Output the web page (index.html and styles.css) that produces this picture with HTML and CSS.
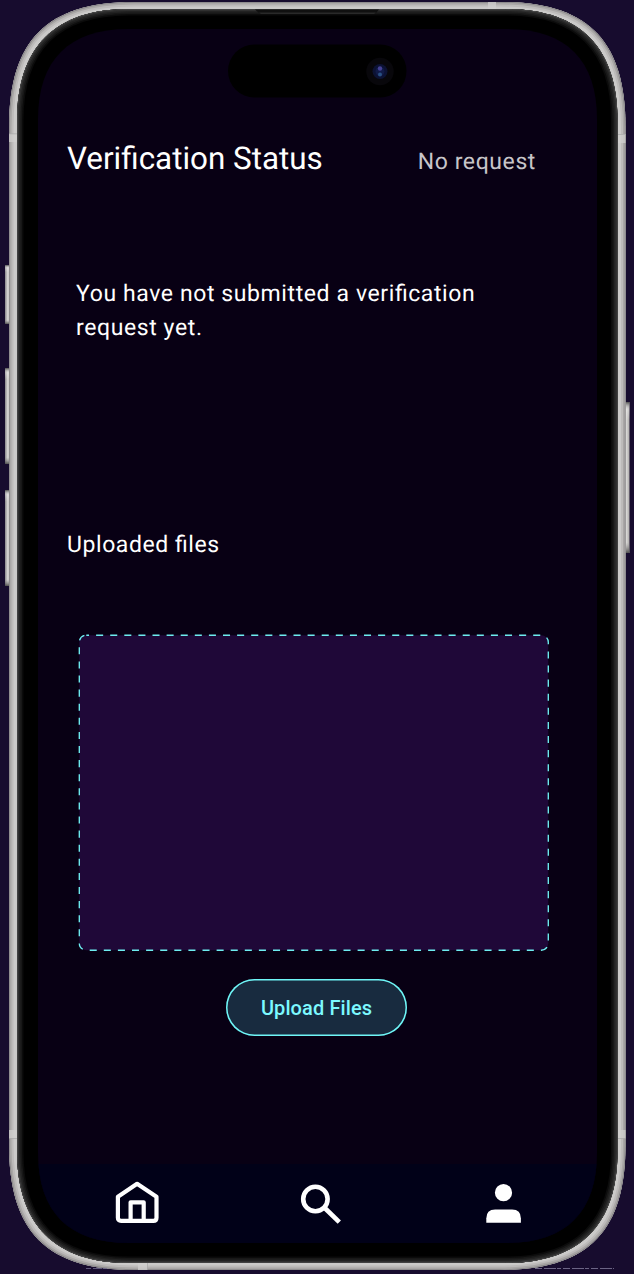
FILE: index.html
```html
<!DOCTYPE html>
<html lang="en">
<head>
<meta charset="utf-8">
<title>Verification Status</title>
<link rel="stylesheet" href="styles.css">
</head>
<body>
<div class="device">
  <svg class="frame" viewBox="0 0 634 1274" aria-hidden="true">
    <defs>
      <linearGradient id="key" x1="0" x2="1" y1="0" y2="0">
        <stop offset="0" stop-color="#88868a"/><stop offset=".45" stop-color="#d8d7d5"/><stop offset="1" stop-color="#aaa8a6"/>
      </linearGradient>
      <linearGradient id="keyEnds" x1="0" x2="0" y1="0" y2="1">
        <stop offset="0" stop-color="#444" stop-opacity=".9"/><stop offset=".05" stop-color="#fff" stop-opacity=".3"/><stop offset=".12" stop-color="#fff" stop-opacity="0"/>
        <stop offset=".93" stop-color="#888" stop-opacity="0"/><stop offset="1" stop-color="#444" stop-opacity=".9"/>
      </linearGradient>
      <path id="outer" d="M9 127C9 40 47 2 134 2H500.500C587.500 2 625.500 40 625.500 127V1145C625.500 1232 587.500 1270 500.500 1270H134C47 1270 9 1232 9 1145Z"/>
      <path id="inner" d="M17 121C17 47 55 9 129 9H505.500C579.500 9 617.500 47 617.500 121V1151C617.500 1225 579.500 1263 505.500 1263H129C55 1263 17 1225 17 1151Z"/>
      <clipPath id="outerClip"><use href="#outer"/></clipPath>
      <clipPath id="innerClip"><use href="#inner"/></clipPath>
      <clipPath id="screenClip"><path d="M38 119C38 60 69 29 128 29H507C566 29 597 60 597 119V1153C597 1212 566 1243 507 1243H128C69 1243 38 1212 38 1153Z"/></clipPath>
    </defs>
    <g fill="url(#key)">
      <rect x="5" y="265" width="6" height="59"/><rect x="5" y="368" width="6" height="96"/><rect x="5" y="490" width="6" height="96"/><rect x="624" y="402" width="5.500" height="151"/>
    </g>
    <g fill="url(#keyEnds)">
      <rect x="5" y="265" width="6" height="59"/><rect x="5" y="368" width="6" height="96"/><rect x="5" y="490" width="6" height="96"/><rect x="624" y="402" width="5.500" height="151"/>
    </g>
    <g clip-path="url(#outerClip)" fill="none">
      <use href="#outer" fill="#cbcac9"/>
      <use href="#outer" stroke="#bdbbba" stroke-width="9"/>
      <use href="#outer" stroke="#a9a7a6" stroke-width="5"/>
      <use href="#outer" stroke="#888688" stroke-width="1.500"/>
      <path fill="#d0cfce" opacity=".75" d="M9 134h8v8H9zM617 134h9v9h-9zM488 2h8v7h-8zM9 1130h8v8H9zM617 1130h9v8h-9zM138 1263h9v7h-9z"/>
      <path fill="#aaa" d="M9 133.500h8v.7H9zM617 134h9v.7h-9zM9 1138h8v.7H9zM617 1138h9v.7h-9zM147 1263h.7v7h-.7z"/>
    </g>
    <g clip-path="url(#innerClip)" fill="none">
      <use href="#inner" fill="#000"/>
      <use href="#inner" stroke="#0b0b0b" stroke-width="13"/>
      <use href="#inner" stroke="#171717" stroke-width="10"/>
      <use href="#inner" stroke="#222" stroke-width="7"/>
      <use href="#inner" stroke="#303030" stroke-width="4"/>
      <use href="#inner" stroke="#555" stroke-width="1"/>
      <path fill="#101010" d="M255 9.500H379L376 13H259Z"/>
      <path fill="#292929" d="M259 12.500H376L374 14H261Z"/>
    </g>
    <g clip-path="url(#screenClip)">
      <path fill="#080014" d="M38 29h559v1214H38z"/>
      <path fill="#010118" d="M38 1164h559v79H38z"/>
    </g>
    <rect x="228" y="44.500" width="178.500" height="53" rx="26.500" fill="#000"/>
    <circle cx="380" cy="71.500" r="13.700" fill="#08070b"/>
    <circle cx="380" cy="71.500" r="7.500" fill="#0c1233"/>
    <circle cx="380" cy="71.500" r="4.500" fill="#111b48"/>
    <circle cx="380" cy="68.500" r="2.200" fill="#454295"/>
    <circle cx="380" cy="74.500" r="2" fill="#295083"/>
    <path d="M86 1268.500h21" stroke="#716b8e" stroke-width=".8" stroke-dasharray="5 2 9 1"/>
    <path d="M535 1268.500h79" stroke="#817b9b" stroke-width=".8" stroke-dasharray="7 2 12 1 4 2"/>
  </svg>
  <main class="screen">
    <header class="header">
      <h1 class="title">Verification Status</h1>
      <span class="status">No request</span>
    </header>
    <p class="message">You have not submitted a verification request yet.</p>
    <h2 class="subtitle">Uploaded files</h2>
    <svg class="dropzone" viewBox="0 0 472 318" aria-label="Uploaded files area">
      <rect x="1.300" y="1.200" width="469" height="315" rx="7" fill="#1f0838"/>
      <rect x="1.300" y="1.200" width="469" height="315" rx="7" fill="none" stroke="#6eedf0" stroke-width="1.350" stroke-dasharray="7.050 7.050" stroke-dashoffset="4.300"/>
    </svg>
    <button class="upload">Upload Files</button>
    <nav class="nav">
      <svg class="icon" viewBox="0 0 48 48" aria-label="Home" fill="none" stroke="#fff" stroke-width="4.200" stroke-linejoin="round"><path d="M4.900 17.700 24.100 4.800 43.500 17.700V38.700Q43.500 41.900 40.300 41.900H8.100Q4.900 41.900 4.900 38.700Z"/><path d="M17.600 41.500V23.300H30.700V41.500"/></svg>
      <svg class="icon" viewBox="0 0 48 48" aria-label="Search" fill="none" stroke="#fff"><circle cx="18.400" cy="20" r="12.200" stroke-width="4.600"/><path d="M27.500 28.800 42.300 43.100" stroke-width="4.700"/></svg>
      <svg class="icon" viewBox="0 0 48 48" aria-label="Profile" fill="#fff"><circle cx="23.500" cy="13.700" r="8.600"/><path d="M6.300 43.700V39.200Q6.300 30.400 15.100 30.400H32.100Q40.900 30.400 40.900 39.200V43.700Z"/></svg>
    </nav>
  </main>
</div>
</body>
</html>
```
FILE: styles.css
```css
* { box-sizing: border-box; }
body { margin: 0; background: #170c2e; font-family: Roboto, sans-serif; color: #fff; font-feature-settings: "liga" 1; text-rendering: geometricPrecision; }
.device { display: grid; width: 634px; height: 1274px; overflow: hidden; }
.frame, .screen { grid-area: 1 / 1; }
.frame { display: block; width: 634px; height: 1274px; }
.screen { z-index: 1; display: flex; flex-direction: column; margin: 29px 37px 30px 38px; padding-top: 110px; }
.header { display: flex; align-items: baseline; justify-content: space-between; height: 40px; padding: 0 61px 0 29px; }
.title { margin: 0; font-size: 31.4px; line-height: 40px; font-weight: 400; letter-spacing: 0; }
.status { color: #c7c5c9; font-size: 23px; letter-spacing: .6px; line-height: 34px; }
.message { width: 420px; margin: 98px 0 0 38px; font-size: 23px; line-height: 34px; letter-spacing: .6px; }
.subtitle { margin: 183px 0 0 29px; font-size: 23px; line-height: 34px; font-weight: 400; letter-spacing: .57px; }
.dropzone { display: block; width: 472px; height: 318px; margin: 72px 0 0 40px; }
.upload { width: 181px; height: 57px; margin: 27px 0 0 188px; border: 0; box-shadow: inset 0 0 0 1.5px #6ff6f7; border-radius: 29px; background: #182b3f; color: #7cf9ff; font: 500 20px/24px Roboto, sans-serif; letter-spacing: .1px; padding: 0; }
.nav { display: flex; justify-content: space-between; margin-top: auto; padding: 0 69px 17px 75px; }
.icon { display: block; width: 48px; height: 48px; }
```
